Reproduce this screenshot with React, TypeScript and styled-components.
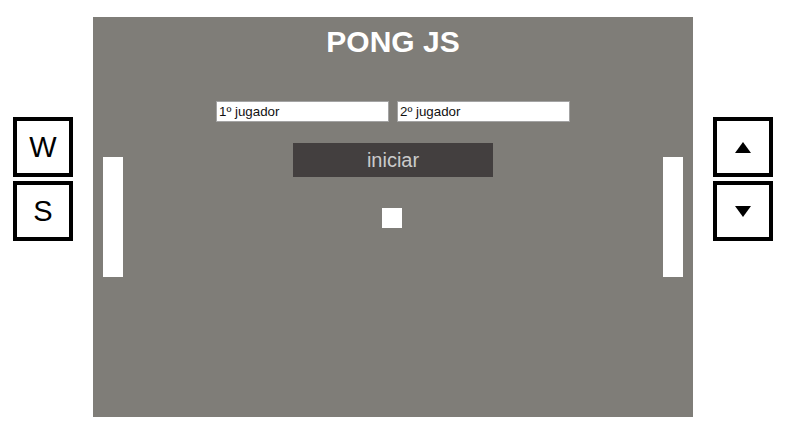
import styled, { createGlobalStyle } from 'styled-components';

const GlobalStyle = createGlobalStyle`
  body {
    margin: 0;
    background: #ffffff;
    font-family: "Liberation Sans", Arial, sans-serif;
  }
`;

const Page = styled.div`
  display: flex;
  align-items: flex-start;
  gap: 20px;
  padding: 17px 0 0 13px;
`;

const KeyColumn = styled.div`
  display: flex;
  flex-direction: column;
  gap: 4px;
  margin-top: 100px;
`;

const Key = styled.div`
  box-sizing: border-box;
  width: 60px;
  height: 60px;
  border: 4px solid #000;
  background: #fff;
  display: flex;
  align-items: center;
  justify-content: center;
  font-size: 29px;
  color: #000;
`;

const Board = styled.div`
  position: relative;
  width: 600px;
  height: 400px;
  background: #7f7d78;
  display: flex;
  flex-direction: column;
  align-items: center;
  padding-top: 8px;
  box-sizing: border-box;
`;

const Title = styled.h1`
  margin: 0;
  font-size: 30px;
  line-height: 34px;
  font-weight: bold;
  color: #fff;
`;

const Players = styled.div`
  display: flex;
  gap: 8px;
  margin-top: 42px;
`;

const NameInput = styled.input`
  box-sizing: border-box;
  width: 173px;
  height: 21px;
  padding: 1px 2px;
  border: 1px solid #a3a3a3;
  background: #fff;
  font-family: "Liberation Sans", Arial, sans-serif;
  font-size: 13.33px;
  color: #111;
  outline: none;
`;

const StartButton = styled.button`
  margin-top: 21px;
  width: 200px;
  height: 34px;
  border: none;
  background: #433f3f;
  color: #cbcbcb;
  font-family: "Liberation Sans", Arial, sans-serif;
  font-size: 20px;
  padding: 0;
`;

const Paddle = styled.div<{ $x: number }>`
  position: absolute;
  left: ${(p) => p.$x}px;
  top: 140px;
  width: 20px;
  height: 120px;
  background: #fff;
`;

const Ball = styled.div`
  position: absolute;
  left: 289px;
  top: 191px;
  width: 20px;
  height: 20px;
  background: #fff;
`;

const Arrow = ({ up }: { up?: boolean }) => (
  <svg width="16" height="11" viewBox="0 0 16 11">
    <polygon points={up ? '8,0 16,11 0,11' : '0,0 16,0 8,11'} fill="#000" />
  </svg>
);

export default function App() {
  return (
    <>
      <GlobalStyle />
      <Page>
        <KeyColumn>
          <Key>W</Key>
          <Key>S</Key>
        </KeyColumn>
        <Board>
          <Title>PONG JS</Title>
          <Players>
            <NameInput defaultValue="1º jugador" />
            <NameInput defaultValue="2º jugador" />
          </Players>
          <StartButton>iniciar</StartButton>
          <Paddle $x={10} />
          <Paddle $x={570} />
          <Ball />
        </Board>
        <KeyColumn>
          <Key>
            <Arrow up />
          </Key>
          <Key>
            <Arrow />
          </Key>
        </KeyColumn>
      </Page>
    </>
  );
}
